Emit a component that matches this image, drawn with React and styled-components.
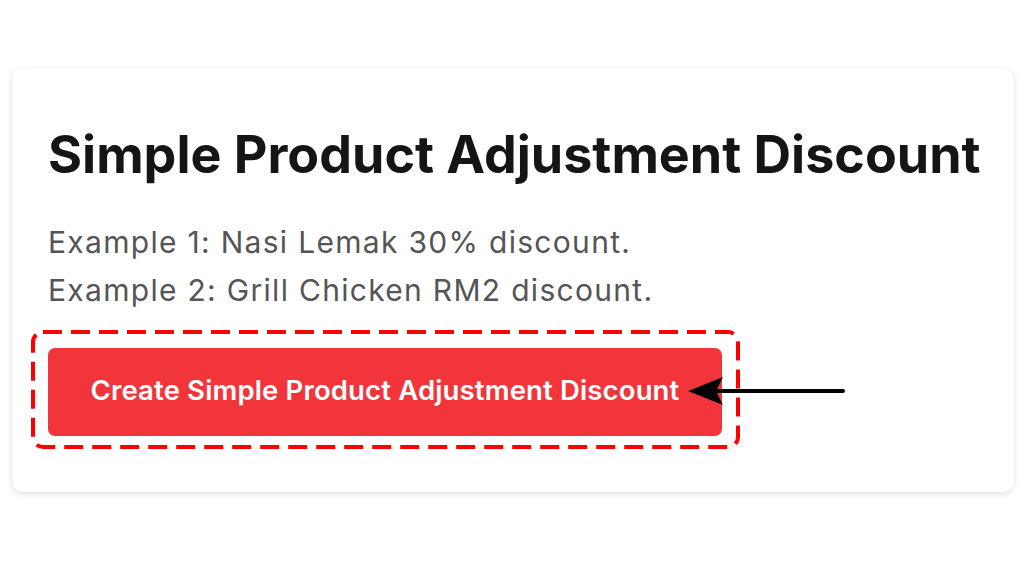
import styled, { createGlobalStyle } from "styled-components";

const GlobalStyle = createGlobalStyle`
  html, body {
    margin: 0;
    padding: 0;
    background: #ffffff;
  }
  body {
    font-family: Inter, "Noto Sans", sans-serif;
  }
`;

const Page = styled.div`
  width: 1024px;
  height: 580px;
  box-sizing: border-box;
  padding: 68px 10px 0 12px;
`;

const Card = styled.section`
  box-sizing: border-box;
  width: 1002px;
  height: 424px;
  padding: 55px 36px 0 36px;
  background: #fff;
  border-radius: 10px;
  box-shadow: 0 2px 6px rgba(0, 0, 0, 0.12), 0 0 2px rgba(0, 0, 0, 0.05);
`;

const Title = styled.h1`
  margin: 0;
  font-size: 52px;
  line-height: 63px;
  font-weight: 700;
  color: #151515;
  white-space: nowrap;
`;

const Examples = styled.p`
  margin: 32px 0 0 0;
  font-size: 30px;
  line-height: 48px;
  font-weight: 400;
  letter-spacing: 1.3px;
  color: #555555;
`;

const Highlight = styled.div`
  position: relative;
  display: inline-block;
  margin: 16px 0 0 -17px;
  padding: 18px 18px 13px 17px;
`;

const DashFrame = styled.svg`
  position: absolute;
  inset: 0;
  width: 100%;
  height: 100%;
  overflow: visible;
  pointer-events: none;
`;

const ActionButton = styled.button`
  display: block;
  width: 674px;
  height: 88px;
  padding: 0 0 4px 0;
  border: none;
  border-radius: 7px;
  background: #f2353b;
  color: #fff;
  font-family: Inter, "Noto Sans", sans-serif;
  font-size: 27.5px;
  font-weight: 600;
  letter-spacing: 0.15px;
  cursor: pointer;
`;

const Pointer = styled.svg`
  position: absolute;
  left: 657px;
  top: 47px;
  width: 160px;
  height: 28px;
  overflow: visible;
`;

function App() {
  return (
    <>
      <GlobalStyle />
      <Page>
        <Card>
          <Title>Simple Product Adjustment Discount</Title>
          <Examples>
            Example 1: Nasi Lemak 30% discount.
            <br />
            Example 2: Grill Chicken RM2 discount.
          </Examples>
          <Highlight>
            <ActionButton>Create Simple Product Adjustment Discount</ActionButton>
            <DashFrame>
              <rect
                x="2"
                y="2"
                width="calc(100% - 4px)"
                height="calc(100% - 4px)"
                rx="10"
                fill="none"
                stroke="#ff0000"
                strokeWidth="4"
                strokeDasharray="19 9"
              />
            </DashFrame>
            <Pointer viewBox="0 0 160 28">
              <line x1="28" y1="14" x2="155" y2="14" stroke="#000" strokeWidth="4" strokeLinecap="round" />
              <path d="M0 14 L35 0 L28 14 L35 28 Z" fill="#000" />
            </Pointer>
          </Highlight>
        </Card>
      </Page>
    </>
  );
}

export default App;
